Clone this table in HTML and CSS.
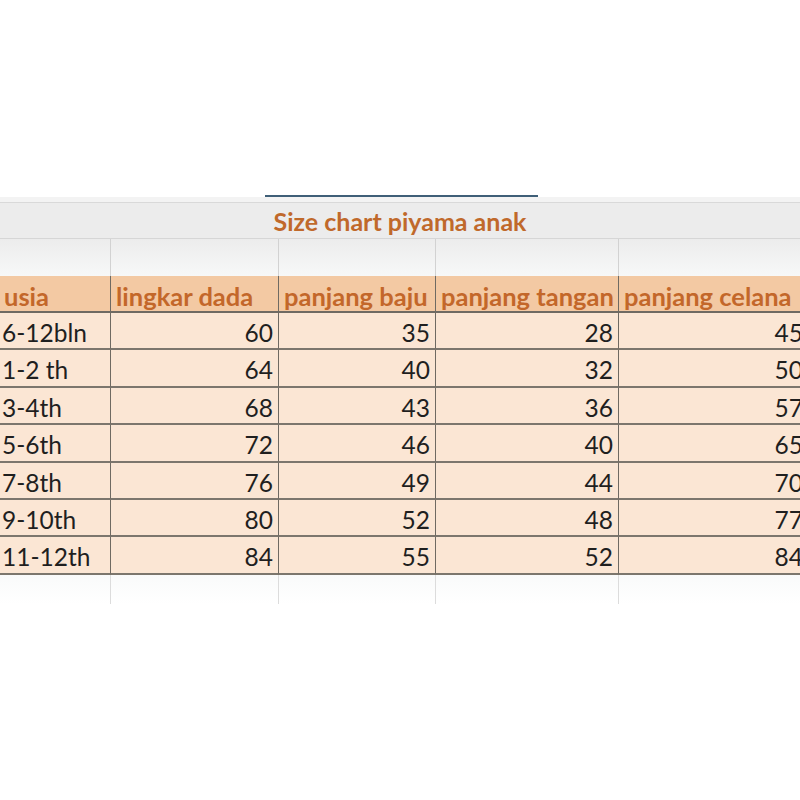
FILE: index.html
```html
<!DOCTYPE html>
<html>
<head>
<meta charset="utf-8">
<link rel="stylesheet" href="styles.css">
</head>
<body>
<div class="sheet">
  <div class="selection"></div>
  <div class="gap"></div>
  <div class="title-row">Size chart piyama anak</div>
  <div class="grid blank-top">
    <div class="c"></div><div class="c"></div><div class="c"></div><div class="c"></div><div class="c"></div>
  </div>
  <div class="grid table">
    <div class="h">usia</div><div class="h">lingkar dada</div><div class="h">panjang baju</div><div class="h">panjang tangan</div><div class="h">panjang celana</div>

    <div class="d l">6-12bln</div><div class="d">60</div><div class="d">35</div><div class="d">28</div><div class="d">45</div>
    <div class="d l">1-2 th</div><div class="d">64</div><div class="d">40</div><div class="d">32</div><div class="d">50</div>
    <div class="d l">3-4th</div><div class="d">68</div><div class="d">43</div><div class="d">36</div><div class="d">57</div>
    <div class="d l">5-6th</div><div class="d">72</div><div class="d">46</div><div class="d">40</div><div class="d">65</div>
    <div class="d l">7-8th</div><div class="d">76</div><div class="d">49</div><div class="d">44</div><div class="d">70</div>
    <div class="d l">9-10th</div><div class="d">80</div><div class="d">52</div><div class="d">48</div><div class="d">77</div>
    <div class="d l">11-12th</div><div class="d">84</div><div class="d">55</div><div class="d">52</div><div class="d">84</div>
  </div>
  <div class="grid blank-bottom">
    <div class="c"></div><div class="c"></div><div class="c"></div><div class="c"></div><div class="c"></div>
  </div>
</div>
</body>
</html>
```
FILE: styles.css
```css
html, body {
  margin: 0;
  padding: 0;
  background: #ffffff;
  overflow: hidden;
}
body {
  width: 800px;
  height: 800px;
  font-family: Lato, "Open Sans", sans-serif;
}
.sheet {
  padding-top: 195px;
  width: 800px;
  overflow: hidden;
}
.selection {
  margin-left: 265px;
  width: 273px;
  height: 2px;
  background: #3f5f78;
}
.gap {
  height: 5px;
  background: #f3f3f3;
}
.title-row {
  height: 35px;
  border-top: 1px solid #d9d9d9;
  background: #ececec;
  color: #c0692b;
  font-weight: 700;
  font-size: 25px;
  line-height: 37px;
  text-align: center;
  white-space: nowrap;
}
.grid {
  display: grid;
  grid-template-columns: 111px 168px 157px 183px 190px;
  width: 809px;
}
.blank-top {
  height: 37px;
  border-top: 1px solid #d6d6d6;
  background: linear-gradient(#ececec, #f7f8f8);
}
.blank-top .c {
  border-right: 1px solid #d2d2d2;
}
.h {
  height: 35px;
  background: #f3c9a3;
  color: #c3672a;
  font-weight: 700;
  font-size: 25.5px;
  line-height: 40px;
  padding-left: 5px;
  border-right: 1px solid #6f6a62;
  border-bottom: 2px solid #6f6a62;
  white-space: nowrap;
  overflow: hidden;
}
.h:first-child {
  padding-left: 4px;
}
.d {
  height: 35.4px;
  background: #fbe6d4;
  color: #1f1f1f;
  font-size: 24.5px;
  line-height: 40px;
  text-align: right;
  padding-right: 5px;
  border-right: 1px solid #6f6a62;
  border-bottom: 2px solid #7c766d;
  white-space: nowrap;
  overflow: hidden;
}
.d.l {
  text-align: left;
  padding-left: 2px;
  padding-right: 0;
}
.blank-bottom {
  height: 29px;
  background: linear-gradient(#f9fafa, #ffffff);
}
.blank-bottom .c {
  border-right: 1px solid #dcdcdc;
}
```
